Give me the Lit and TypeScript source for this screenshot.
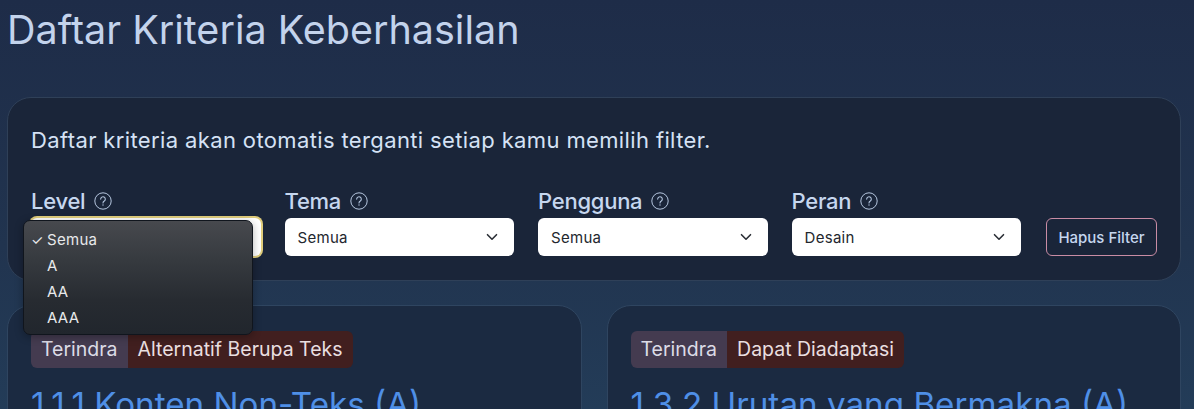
import { LitElement, html, css } from "lit";
import { customElement } from "lit/decorators.js";

const help = html`<svg class="help" viewBox="0 0 18 18" width="18" height="18" fill="none" stroke="currentColor">
  <circle cx="9" cy="9" r="8.2" stroke-width="1"></circle>
  <path d="M6.7 7.1a2.3 2.3 0 1 1 3.6 1.9c-.8.5-1.3 1-1.3 1.9" stroke-width="1.1" stroke-linecap="round"></path>
  <circle cx="9" cy="13" r=".7" fill="currentColor" stroke="none"></circle>
</svg>`;
const chev = html`<svg class="chev" viewBox="0 0 12 8" width="12" height="8" fill="none" stroke="#2b2f36" stroke-width="1.6" stroke-linecap="round" stroke-linejoin="round"><path d="M1.5 1.7 6 6.2l4.5-4.5"></path></svg>`;

@customElement("app-root")
export class AppRoot extends LitElement {
  static styles = css`
    :host {
      display: block;
      position: relative;
      width: 1194px;
      height: 409px;
      overflow: hidden;
      box-sizing: border-box;
      padding: 0 13px 0 7px;
      font-family: Inter, "Liberation Sans", sans-serif;
      background: linear-gradient(180deg, #1e2c48 0%, #21344f 60%, #233c58 100%);
      color: #c9d8ee;
    }
    h1 {
      margin: 0;
      padding-top: 8px;
      height: 97px;
      box-sizing: border-box;
      font-size: 39.5px;
      line-height: 44px;
      font-weight: 400;
      color: #c3d3ec;
    }
    .panel {
      box-sizing: border-box;
      height: 184px;
      border: 1px solid #2f4058;
      border-radius: 24px;
      background: #1a2539;
      padding: 28px 23px 0;
    }
    .panel p {
      margin: 0;
      font-size: 22px;
      letter-spacing: .37px;
      line-height: 28px;
      color: #d5e2f5;
    }
    .filters {
      display: flex;
      align-items: flex-end;
      gap: 24px;
      margin-top: 29px;
    }
    .field { width: 229.5px; flex: none; }
    .field label {
      display: flex;
      align-items: center;
      gap: 9px;
      font-size: 22px;
      font-weight: 500;
      letter-spacing: -.25px;
      line-height: 30px;
      height: 35px;
      color: #c6d7ef;
    }
    .help { color: #b5c6df; }
    .select {
      box-sizing: border-box;
      height: 38px;
      background: #fff;
      border-radius: 6px;
      display: flex;
      align-items: center;
      justify-content: space-between;
      padding: 0 16px 0 13px;
      font-size: 15px;
      color: #23272e;
      letter-spacing: .3px;
    }
    .select.focus { box-shadow: 0 0 0 2px #e0cd7c; }
    .btn {
      box-sizing: border-box;
      height: 38px;
      width: 111px;
      margin-left: 1px;
      border: 1px solid #c98ca4;
      border-radius: 6px;
      background: transparent;
      color: #c6d7ef;
      font: 500 15px Inter, "Liberation Sans", sans-serif;
      padding: 0;
    }
    .cards {
      display: grid;
      grid-template-columns: 574.5px 574.5px;
      gap: 25px;
      margin-top: 24px;
    }
    .card {
      box-sizing: border-box;
      height: 200px;
      border: 1px solid #2f4560;
      border-radius: 24px;
      background: #1b2a41;
      padding: 25px 23px 0;
    }
    .tags { display: flex; font-size: 19.5px; line-height: 37px; }
    .tags span { padding: 0 10px; height: 37px; }
    .t1 { background: #443b50; color: #dcdbe6; border-radius: 6px 0 0 6px; }
    .t2 { background: #411f1f; color: #eadfe0; border-radius: 0 6px 6px 0; }
    h2 {
      margin: 16px 0 0;
      font-size: 33.2px;
      line-height: 40px;
      font-weight: 400;
      color: #4f8fe6;
    }
    .menu {
      position: absolute;
      left: 23px;
      top: 220px;
      width: 230px;
      height: 115px;
      box-sizing: border-box;
      padding: 6px 0;
      border-radius: 7px;
      border: 1px solid #10151d;
      background: linear-gradient(180deg, #47494e 0%, #363a3f 35%, #272b31 70%, #21262d 100%);
      color: #e8e9eb;
      font-size: 15px;
      letter-spacing: .3px;
      box-shadow: 0 2px 8px rgba(0, 0, 0, .3);
    }
    .opt { height: 26px; line-height: 26px; padding-left: 23px; position: relative; }
    .check { position: absolute; left: 7px; top: 0; font-size: 14px; }
  `;

  private field(name: string, value: string, focus = false) {
    return html`<div class="field">
      <label>${name} ${help}</label>
      <div class="select ${focus ? "focus" : ""}"><span>${value}</span>${chev}</div>
    </div>`;
  }

  private card(a: string, b: string, t: string) {
    return html`<article class="card">
      <div class="tags"><span class="t1">${a}</span><span class="t2">${b}</span></div>
      <h2>${t}</h2>
    </article>`;
  }

  render() {
    return html`
      <h1>Daftar Kriteria Keberhasilan</h1>
      <section class="panel">
        <p>Daftar kriteria akan otomatis terganti setiap kamu memilih filter.</p>
        <div class="filters">
          ${this.field("Level", "Semua", true)}
          ${this.field("Tema", "Semua")}
          ${this.field("Pengguna", "Semua")}
          ${this.field("Peran", "Desain")}
          <button class="btn">Hapus Filter</button>
        </div>
      </section>
      <div class="cards">
        ${this.card("Terindra", "Alternatif Berupa Teks", "1.1.1 Konten Non-Teks (A)")}
        ${this.card("Terindra", "Dapat Diadaptasi", "1.3.2 Urutan yang Bermakna (A)")}
      </div>
      <div class="menu">
        <div class="opt"><span class="check">✓</span>Semua</div>
        <div class="opt">A</div>
        <div class="opt">AA</div>
        <div class="opt">AAA</div>
      </div>
    `;
  }
}
